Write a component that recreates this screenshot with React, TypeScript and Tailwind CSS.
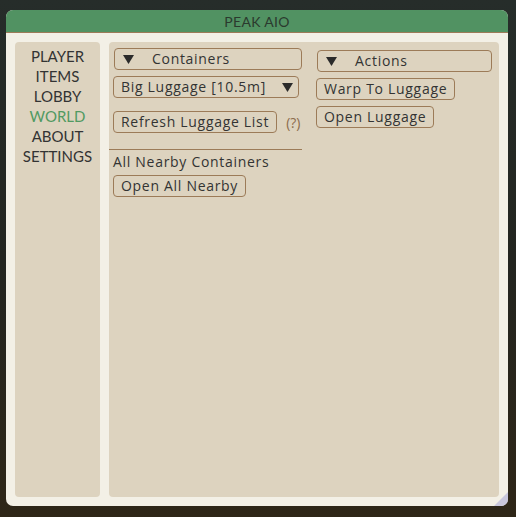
import React from 'react';

const font = { fontFamily: '"Lato", "Noto Sans", sans-serif' };
const body = { fontFamily: '"Open Sans", "Noto Sans", sans-serif' };

const NAV = ['PLAYER', 'ITEMS', 'LOBBY', 'WORLD', 'ABOUT', 'SETTINGS'];

function Tri() {
  return (
    <svg width="11" height="9" viewBox="0 0 11 9" className="shrink-0">
      <polygon points="0,0 11,0 5.5,9" fill="#2b2b2b" />
    </svg>
  );
}

function Btn({ children, className = '' }: { children: React.ReactNode; className?: string }) {
  return (
    <div
      className={`h-[22px] flex items-center px-[7px] border border-[#9c7b58] rounded-[4px] text-[14px] tracking-[0.7px] text-[#333] leading-none ${className}`}
      style={body}
    >
      {children}
    </div>
  );
}

function Header({ label, className = '' }: { label: string; className?: string }) {
  return (
    <Btn className={className}>
      <span className="ml-[1px] w-[29px] flex">
        <Tri />
      </span>
      <span>{label}</span>
    </Btn>
  );
}

export default function App() {
  return (
    <div
      className="w-[516px] h-[517px] bg-gradient-to-b from-[#262d2a] via-[#232520] to-[#2e2617] pt-[10px] pl-[6px]"
      style={font}
    >
      <div className="w-[502px] h-[496px] rounded-[7px] overflow-hidden bg-[#f3f0e6] flex flex-col relative">
        {/* Title */}
        <div className="h-[23px] bg-[#519262] border-b border-[#9c7b58] flex items-center justify-center text-[14px] tracking-[0.3px] text-[#2b3a2e]">
          PEAK AIO
        </div>

        <div className="flex-1 flex gap-[9px] px-[9px] pt-[9px] pb-[9px]">
          {/* Nav */}
          <div className="w-[85px] bg-[#ddd3bf] rounded-[4px] flex flex-col items-center pt-[4px] text-[15px] leading-[20px] text-[#333]">
            {NAV.map((n) => (
              <div key={n} className={n === 'WORLD' ? 'text-[#519a62]' : ''}>
                {n}
              </div>
            ))}
          </div>

          {/* Content */}
          <div className="flex-1 bg-[#ddd3bf] rounded-[4px] flex gap-[14px] pt-[6px] pl-[4px] pr-[8px]">
            <div className="w-[189px] flex flex-col">
              <Header label="Containers" className="ml-[1px] w-[188px]" />
              <Btn className="mt-[6px] w-[186px] justify-between pr-[5px]">
                <span>Big Luggage [10.5m]</span>
                <Tri />
              </Btn>
              <div className="mt-[13px] flex items-center">
                <Btn>Refresh Luggage List</Btn>
                <span className="ml-[9px] text-[14px] text-[#8c6c4c]" style={body}>(?)</span>
              </div>
              <div className="mt-[16px] -ml-[4px] h-px bg-[#9c7b58] w-[193px]" />
              <div className="mt-[3px] text-[14px] tracking-[0.7px] text-[#333] leading-[18px]" style={body}>
                All Nearby Containers
              </div>
              <div className="mt-[4px] flex">
                <Btn>Open All Nearby</Btn>
              </div>
            </div>

            <div className="flex-1 flex flex-col pt-[2px] items-start">
              <Header label="Actions" className="w-full ml-[1px]" />
              <Btn className="mt-[6px]">Warp To Luggage</Btn>
              <Btn className="mt-[6px]">Open Luggage</Btn>
            </div>
          </div>
        </div>

        {/* resize grip */}
        <div className="absolute right-0 bottom-0 w-0 h-0 border-l-[14px] border-l-transparent border-b-[14px] border-b-[#c9c7dc]" />
      </div>
    </div>
  );
}
